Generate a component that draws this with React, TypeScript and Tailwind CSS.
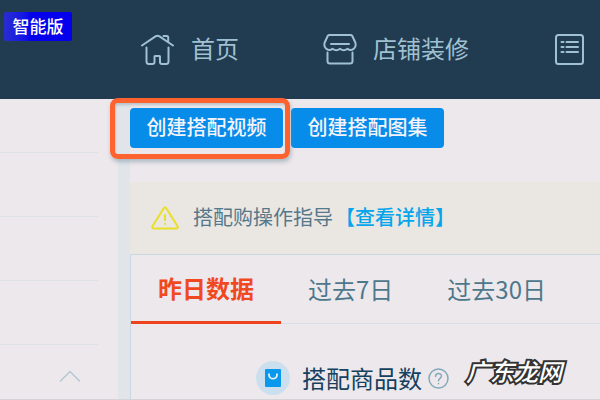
import type { ReactNode } from "react";

const tabs = ["昨日数据", "过去7日", "过去30日"];
const sidebarRows = ["h-[54px]", "h-16", "h-16", "h-16"];

function HomeIcon() {
  return (
    <svg className="h-[34px] w-[34px] shrink-0" viewBox="0 0 34 34" fill="none" stroke="currentColor" strokeWidth="2" strokeLinecap="round" strokeLinejoin="round" aria-hidden="true">
      <path d="M1 12.500 14.500 3.400q2-1.300 4 0L32 12.500" />
      <path d="M22.500 3h3.200q1.500 0 1.500 1.500V8" />
      <path d="M5.500 14.500v14q0 2.500 2.500 2.500h3.500q2 0 2-2v-5.500q0-.5.5-.5h4.500q.5 0 .5.5V29q0 2 2 2h4q2.500 0 2.500-2.500v-14" />
    </svg>
  );
}

function ShopIcon() {
  return (
    <svg className="h-[34px] w-[34px] shrink-0" viewBox="0 0 34 34" fill="none" stroke="currentColor" strokeWidth="2" strokeLinecap="round" strokeLinejoin="round" aria-hidden="true">
      <path d="M6.500 2h21q1.200 0 1.800 1l3 6.500q1.200 3.500-1.300 6-3.500 3-6.500.2-3.700 3-7.500 0-3.700 3-7.500 0-3 2.800-6.500-.2-2.500-2.500-1.300-6l3-6.500q.6-1 1.800-1z" />
      <path d="M8 11h18M4.500 19.500V28q0 2.500 2.500 2.500h20q2.500 0 2.500-2.500v-8.500" />
    </svg>
  );
}

function ListIcon() {
  return (
    <svg className="h-[34px] w-[34px] shrink-0" viewBox="0 0 34 34" fill="none" stroke="currentColor" strokeWidth="2" strokeLinecap="round" aria-hidden="true">
      <rect x="3" y="2" width="27" height="29" rx="2.500" />
      <path d="M8.500 9h2M8.500 14h2M8.500 19h2M13.500 9H25M13.500 14H25M13.500 19H25" />
    </svg>
  );
}

function NavItem({ icon, label }: { icon: ReactNode; label?: string }) {
  return (
    <a href="#" aria-label={label ?? "列表"} className="flex shrink-0 items-center gap-4 whitespace-nowrap text-2xl">
      {icon}
      {label && <span className="pb-1">{label}</span>}
    </a>
  );
}

function ActionButton({ label }: { label: string }) {
  return (
    <button className="h-10 w-[153px] rounded bg-[#078de9] pb-0.5 text-center text-[20px] font-medium text-[#f4f3fa]">
      {label}
    </button>
  );
}

export default function App() {
  return (
    <div className="relative flex min-h-screen flex-col overflow-hidden border-b border-[#d5d3d8] bg-[#ede8ec] font-['Noto_Sans_CJK_SC','Noto_Sans',sans-serif]">
      <header className="flex h-[99px] items-center bg-[#213b50] text-[#a0c1d2]">
        <div className="w-[141px] shrink-0 self-start pt-3 pl-1">
          <span className="flex h-[29px] w-[68px] items-center justify-center rounded-xs bg-linear-to-r from-[#2a2bd0] to-[#0500ec] to-40% pb-0.5 text-[17px] font-medium text-white">
            智能版
          </span>
        </div>
        <nav className="flex items-center gap-[84px]">
          <NavItem icon={<HomeIcon />} label="首页" />
          <NavItem icon={<ShopIcon />} label="店铺装修" />
          <NavItem icon={<ListIcon />} />
        </nav>
      </header>

      <div className="flex flex-1">
        <aside className="w-[118px] shrink-0">
          <div className="pr-5">
            {sidebarRows.map((height, i) => (
              <div key={i} className={`${height} border-b border-[#dee2e7]`} />
            ))}
          </div>
          <button aria-label="收起" className="mt-6 ml-[59px] block text-[#b4c8d1]">
            <svg className="h-4 w-[22px]" viewBox="0 0 22 16" fill="none" stroke="currentColor" strokeWidth="1.500" aria-hidden="true">
              <path d="M1 12.500 11 2.500l10 10" />
            </svg>
          </button>
        </aside>

        <main className="flex min-w-0 flex-1 flex-col border-l-12 border-[#e1e5ea]">
          <div className="flex gap-2 pt-[9px]">
            <div className="relative">
              <ActionButton label="创建搭配视频" />
              <div className="pointer-events-none absolute -top-[10px] -right-[7px] -bottom-[11px] -left-5 rounded-lg border-5 border-[#fd622f] shadow-[1px_3px_4px_rgba(110,140,155,0.5),inset_1px_2px_3px_rgba(110,140,155,0.4)]" />
            </div>
            <ActionButton label="创建搭配图集" />
          </div>

          <div className="mt-[34px] flex h-[72px] items-center bg-[#eae7e3] pb-0.5 pl-[21px] text-[20px] text-[#55788a]">
            <svg className="mr-[14px] h-7 w-7" viewBox="0 0 28 28" fill="none" stroke="#e9df26" strokeWidth="2" strokeLinecap="round" strokeLinejoin="round" aria-hidden="true">
              <path d="M12.600 5.500q1.400-2 2.800 0l11 17.500q1.200 2.500-1.500 2.500H3.100Q.4 25.500 1.600 23z" />
              <path d="M14 12v5M14 20.800v.2" />
            </svg>
            <span>搭配购操作指导</span>
            <a href="#" className="ml-0.5 font-medium text-[#05a5ec]">【查看详情】</a>
          </div>

          <section className="flex-1 border-t border-l border-[#c8d8e1]">
            <div role="tablist" className="flex h-[69px] border-b border-[#d5dfe5] text-2xl">
              {tabs.map((tab, i) => (
                <button
                  key={tab}
                  role="tab"
                  aria-selected={i === 0}
                  className={
                    i === 0
                      ? "-mb-px border-b-3 border-[#ef431d] px-[27px] font-bold text-[#f0491f]"
                      : "px-[27px] text-[#4d788c]"
                  }
                >
                  {tab}
                </button>
              ))}
            </div>
            <div className="flex items-center pt-[37px] pl-[125px]">
              <span className="flex h-[34px] w-[34px] items-center justify-center rounded-full bg-[#cbdfee]">
                <svg className="h-[18px] w-4" viewBox="0 0 16 18" fill="none" aria-hidden="true">
                  <rect width="16" height="18" rx="1" fill="#0898ec" />
                  <path d="M4 4.500v1.200a4 4 0 0 0 8 0V4.500" stroke="#e6f1f8" strokeWidth="1.800" />
                </svg>
              </span>
              <span className="ml-3 text-2xl text-[#15405e]">搭配商品数</span>
              <button aria-label="帮助" className="ml-[6px] text-[#83a9bb]">
                <svg className="h-[21px] w-[21px]" viewBox="0 0 21 21" fill="none" stroke="currentColor" strokeWidth="1.500" strokeLinecap="round" aria-hidden="true">
                  <circle cx="10.500" cy="10.500" r="9.500" />
                  <path d="M7.500 8.500c0-4 6-4 6-.4 0 2.200-3 2.400-3 4.700M10.500 15.500v.2" />
                </svg>
              </button>
            </div>
          </section>
        </main>
      </div>

      <div className="absolute right-[38px] bottom-3 text-2xl font-medium text-white italic [-webkit-text-stroke:4px_#333333] [paint-order:stroke_fill]">
        广东龙网
      </div>
    </div>
  );
}
